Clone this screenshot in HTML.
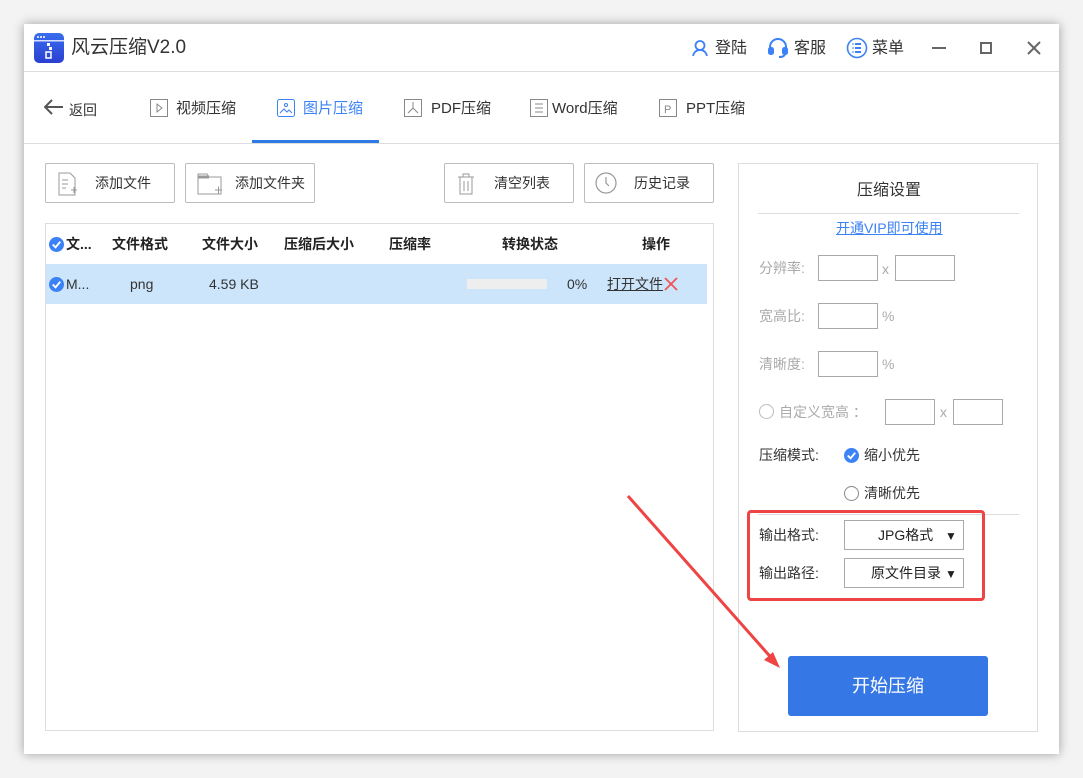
<!DOCTYPE html>
<html><head><meta charset="utf-8"><style>
*{margin:0;padding:0;box-sizing:border-box}
body{width:1083px;height:778px;background:#f3f3f3;font-family:"Liberation Sans","Noto Sans CJK SC",sans-serif;position:relative;overflow:hidden;color:#333;line-height:1.2}
.win{position:absolute;left:24px;top:24px;width:1035px;height:730px;background:#fff;box-shadow:0 0 10px rgba(0,0,0,.35)}
.a{position:absolute;white-space:nowrap}
.btn{position:absolute;top:163px;height:40px;border:1px solid #bdbdbd;border-radius:2px;background:#fff;font-size:14px;color:#333}
.th{position:absolute;top:236px;font-size:14px;font-weight:bold;color:#222}
.lab{position:absolute;font-size:14px;color:#aaa}
.box{position:absolute;border:1px solid #aaa;background:#fff}
.sel{position:absolute;left:844px;width:120px;height:30px;border:1px solid #aaa;background:#fff;font-size:14px;color:#222}
</style></head><body>
<div class="win"></div>
<svg class="a" style="left:34px;top:33px" width="30" height="30" viewBox="0 0 30 30"><defs><linearGradient id="g" x1="0" y1="0" x2="0" y2="1"><stop offset="0" stop-color="#3a6df0"/><stop offset="1" stop-color="#2a3fd0"/></linearGradient></defs><rect width="30" height="30" rx="5" fill="url(#g)"/><rect x="0" y="7" width="30" height="1.5" fill="#fff" opacity=".8"/><circle cx="4" cy="4" r="1" fill="#fff"/><circle cx="7" cy="4" r="1" fill="#fff"/><circle cx="10" cy="4" r="1" fill="#fff"/><rect x="13" y="10" width="3" height="3" fill="#fff"/><rect x="15" y="14" width="3" height="3" fill="#fff"/><rect x="12" y="19" width="5" height="6" fill="none" stroke="#fff" stroke-width="1.5"/></svg>
<div class="a" style="left:71px;top:37px;font-size:19px;color:#333">风云压缩V2.0</div>
<svg class="a" style="left:691px;top:39px" width="18" height="18" viewBox="0 0 18 18" fill="none" stroke="#3b82f6" stroke-width="1.8"><circle cx="9" cy="6.5" r="4.5"/><path d="M2 17c1-4 3-6 7-6s6 2 7 6"/></svg>
<div class="a" style="left:715px;top:39px;font-size:16px">登陆</div>
<svg class="a" style="left:767px;top:37px" width="22" height="22" viewBox="0 0 22 22" fill="none" stroke="#3b82f6" stroke-width="2"><path d="M3 13V10a8 8 0 0 1 16 0v3"/><rect x="2" y="11" width="4" height="6" rx="1.5" fill="#3b82f6"/><rect x="16" y="11" width="4" height="6" rx="1.5" fill="#3b82f6"/><path d="M18 17c-1 3-4 3-6 3"/></svg>
<div class="a" style="left:794px;top:39px;font-size:16px">客服</div>
<svg class="a" style="left:846px;top:37px" width="22" height="22" viewBox="0 0 22 22" fill="none" stroke="#3b82f6" stroke-width="1.6"><circle cx="11" cy="11" r="9.5"/><path d="M9 7h6M9 11h6M9 15h6M6.5 7h1M6.5 11h1M6.5 15h1" stroke-width="2"/></svg>
<div class="a" style="left:872px;top:39px;font-size:16px">菜单</div>
<div class="a" style="left:932px;top:47px;width:14px;height:2px;background:#666"></div>
<div class="a" style="left:980px;top:42px;width:12px;height:12px;border:2px solid #666"></div>
<svg class="a" style="left:1027px;top:41px" width="14" height="14" viewBox="0 0 14 14" stroke="#666" stroke-width="2"><path d="M1 1l12 12M13 1L1 13"/></svg>
<div class="a" style="left:24px;top:71px;width:1035px;height:1px;background:#ddd"></div>
<svg class="a" style="left:44px;top:99px" width="20" height="16" viewBox="0 0 20 16" fill="none" stroke="#555" stroke-width="2"><path d="M19 8H2M8 1L1 8l7 7"/></svg>
<div class="a" style="left:69px;top:102px;font-size:14px">返回</div>
<svg class="a" style="left:150px;top:99px" width="18" height="18" viewBox="0 0 18 18" fill="none" stroke="#888"><rect x=".5" y=".5" width="17" height="17"/><path d="M7 5l5 4-5 4z"/></svg>
<div class="a" style="left:176px;top:100px;font-size:15px">视频压缩</div>
<svg class="a" style="left:277px;top:99px" width="18" height="18" viewBox="0 0 18 18" fill="none" stroke="#3b82f6"><rect x=".5" y=".5" width="17" height="17" rx="2"/><circle cx="9" cy="6" r="1.5"/><path d="M3 14l4-4 3 3 2-2 3 3"/></svg>
<div class="a" style="left:303px;top:100px;font-size:15px;color:#3b82f6">图片压缩</div>
<div class="a" style="left:252px;top:140px;width:127px;height:3px;background:#2f7ae5"></div>
<svg class="a" style="left:404px;top:99px" width="18" height="18" viewBox="0 0 18 18" fill="none" stroke="#888"><rect x=".5" y=".5" width="17" height="17"/><path d="M9 3v6l-5 5M9 9l5 5"/></svg>
<div class="a" style="left:431px;top:100px;font-size:15px">PDF压缩</div>
<svg class="a" style="left:530px;top:99px" width="18" height="18" viewBox="0 0 18 18" fill="none" stroke="#888"><rect x=".5" y=".5" width="17" height="17"/><path d="M5 5h8M5 9h8M5 13h8"/></svg>
<div class="a" style="left:552px;top:100px;font-size:15px">Word压缩</div>
<svg class="a" style="left:659px;top:99px" width="18" height="18" viewBox="0 0 18 18" fill="none" stroke="#888"><rect x=".5" y=".5" width="17" height="17"/><text x="5" y="14" font-size="11" fill="#888" stroke="none" font-family="Liberation Sans">P</text></svg>
<div class="a" style="left:686px;top:100px;font-size:15px">PPT压缩</div>
<div class="a" style="left:24px;top:143px;width:1035px;height:1px;background:#ddd"></div>
<div class="btn" style="left:45px;width:130px"><svg class="a" style="left:12px;top:8px" width="20" height="24" viewBox="0 0 20 24" fill="none" stroke="#999"><path d="M1 1h11l5 5v17H1z"/><path d="M4 8h6M4 12h6M4 16h4M13 18h6M16 15v6"/></svg><span class="a" style="left:49px;top:11px">添加文件</span></div>
<div class="btn" style="left:185px;width:130px"><svg class="a" style="left:11px;top:9px" width="28" height="22" viewBox="0 0 28 22" fill="none" stroke="#999"><path d="M1 1h9l2 3h12v17H1z"/><path d="M1 4h11" stroke-width="3"/><path d="M18 17h7M21.5 13.5v7"/></svg><span class="a" style="left:49px;top:11px">添加文件夹</span></div>
<div class="btn" style="left:444px;width:130px"><svg class="a" style="left:12px;top:9px" width="18" height="22" viewBox="0 0 18 22" fill="none" stroke="#999"><path d="M1 4h16M6 4V1h6v3M3 4v17h12V4M7 8v10M11 8v10"/></svg><span class="a" style="left:49px;top:11px">清空列表</span></div>
<div class="btn" style="left:584px;width:130px"><svg class="a" style="left:10px;top:8px" width="22" height="22" viewBox="0 0 22 22" fill="none" stroke="#999" stroke-width="1.2"><circle cx="11" cy="11" r="10"/><path d="M11 5v6l3 3"/></svg><span class="a" style="left:49px;top:11px">历史记录</span></div>
<div class="a" style="left:45px;top:223px;width:669px;height:508px;border:1px solid #ddd"></div>
<svg class="a" style="left:49px;top:237px" width="15" height="15" viewBox="0 0 16 16"><circle cx="8" cy="8" r="8" fill="#3b82f6"/><path d="M4 8l3 3 5-6" fill="none" stroke="#fff" stroke-width="2"/></svg>
<div class="th" style="left:66px">文...</div>
<div class="th" style="left:112px">文件格式</div>
<div class="th" style="left:202px">文件大小</div>
<div class="th" style="left:284px">压缩后大小</div>
<div class="th" style="left:389px">压缩率</div>
<div class="th" style="left:502px">转换状态</div>
<div class="th" style="left:642px">操作</div>
<div class="a" style="left:46px;top:264px;width:661px;height:40px;background:#cce5fb"></div>
<svg class="a" style="left:49px;top:277px" width="15" height="15" viewBox="0 0 16 16"><circle cx="8" cy="8" r="8" fill="#3b82f6"/><path d="M4 8l3 3 5-6" fill="none" stroke="#fff" stroke-width="2"/></svg>
<div class="a" style="left:66px;top:276px;font-size:14px">M...</div>
<div class="a" style="left:130px;top:276px;font-size:14px">png</div>
<div class="a" style="left:209px;top:276px;font-size:14px">4.59 KB</div>
<div class="a" style="left:467px;top:279px;width:80px;height:10px;background:#eee"></div>
<div class="a" style="left:567px;top:276px;font-size:14px">0%</div>
<div class="a" style="left:607px;top:276px;font-size:14px;text-decoration:underline">打开文件</div>
<svg class="a" style="left:664px;top:277px" width="14" height="14" viewBox="0 0 14 14" stroke="#e55" stroke-width="1.8"><path d="M1 1l12 12M13 1L1 13"/></svg>
<div class="a" style="left:738px;top:163px;width:300px;height:569px;border:1px solid #ddd"></div>
<div class="a" style="left:857px;top:181px;font-size:16px">压缩设置</div>
<div class="a" style="left:758px;top:213px;width:261px;height:1px;background:#ddd"></div>
<div class="a" style="left:836px;top:220px;font-size:14px;color:#3b82f6;text-decoration:underline">开通VIP即可使用</div>
<div class="lab" style="left:759px;top:260px">分辨率:</div>
<div class="box" style="left:818px;top:255px;width:60px;height:26px"></div>
<div class="lab" style="left:882px;top:261px">x</div>
<div class="box" style="left:895px;top:255px;width:60px;height:26px"></div>
<div class="lab" style="left:759px;top:308px">宽高比:</div>
<div class="box" style="left:818px;top:303px;width:60px;height:26px"></div>
<div class="lab" style="left:882px;top:308px">%</div>
<div class="lab" style="left:759px;top:356px">清晰度:</div>
<div class="box" style="left:818px;top:351px;width:60px;height:26px"></div>
<div class="lab" style="left:882px;top:356px">%</div>
<div class="a" style="left:759px;top:404px;width:15px;height:15px;border:1px solid #bbb;border-radius:50%"></div>
<div class="lab" style="left:779px;top:404px">自定义宽高 ：</div>
<div class="box" style="left:885px;top:399px;width:50px;height:26px"></div>
<div class="lab" style="left:940px;top:404px">x</div>
<div class="box" style="left:953px;top:399px;width:50px;height:26px"></div>
<div class="a" style="left:759px;top:447px;font-size:14px;color:#333">压缩模式:</div>
<svg class="a" style="left:844px;top:448px" width="15" height="15" viewBox="0 0 16 16"><circle cx="8" cy="8" r="8" fill="#3b82f6"/><path d="M4 8l3 3 5-6" fill="none" stroke="#fff" stroke-width="2"/></svg>
<div class="a" style="left:864px;top:447px;font-size:14px">缩小优先</div>
<div class="a" style="left:844px;top:486px;width:15px;height:15px;border:1px solid #888;border-radius:50%"></div>
<div class="a" style="left:864px;top:485px;font-size:14px">清晰优先</div>
<div class="a" style="left:758px;top:514px;width:261px;height:1px;background:#ddd"></div>
<div class="a" style="left:747px;top:510px;width:238px;height:91px;border:3px solid #e44;border-radius:4px"></div>
<div class="a" style="left:759px;top:527px;font-size:14px">输出格式:</div>
<div class="sel" style="top:520px"><span class="a" style="left:33px;top:6px">JPG格式</span><span class="a" style="left:100px;top:8px;font-size:12px">▼</span></div>
<div class="a" style="left:759px;top:565px;font-size:14px">输出路径:</div>
<div class="sel" style="top:558px"><span class="a" style="left:26px;top:6px">原文件目录</span><span class="a" style="left:100px;top:8px;font-size:12px">▼</span></div>
<svg class="a" style="left:620px;top:490px" width="170" height="185" viewBox="0 0 170 185"><path d="M8 6L155 172" stroke="#e44" stroke-width="3"/><path d="M160 178l-16-8 9-8z" fill="#e44"/></svg>
<div class="a" style="left:788px;top:656px;width:200px;height:60px;background:#3578e5;border-radius:3px;color:#fff;font-size:18px;text-align:center;line-height:60px">开始压缩</div>
</body></html>
